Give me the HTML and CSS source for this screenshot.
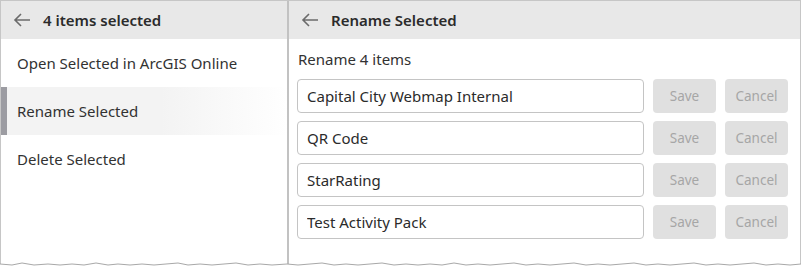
FILE: index.html
```html
<!DOCTYPE html>
<html lang="en">
<head>
  <meta charset="UTF-8" />
  <title>Rename Selected</title>
  <link rel="stylesheet" href="styles.css">
</head>
<body>
  <div class="frame">
    <!-- Left panel: selection actions -->
    <div class="side">
      <div class="panel-header">
        <svg class="back" width="18" height="14" viewBox="0 0 18 14"><path d="M17 7H2M8 1L2 7l6 6" fill="none" stroke="#6b6b6b" stroke-width="1.6"/></svg>
        <span>4 items selected</span>
      </div>
      <a href="#" class="menu-item">Open Selected in ArcGIS Online</a>
      <a href="#" class="menu-item active">Rename Selected</a>
      <a href="#" class="menu-item">Delete Selected</a>
    </div>

    <!-- Right panel: rename form -->
    <div class="main">
      <div class="panel-header">
        <svg class="back" width="18" height="14" viewBox="0 0 18 14"><path d="M17 7H2M8 1L2 7l6 6" fill="none" stroke="#6b6b6b" stroke-width="1.6"/></svg>
        <span>Rename Selected</span>
      </div>
      <div class="rename-body">
        <div class="rename-label">Rename 4 items</div>
        <div class="rename-row">
          <input type="text" value="Capital City Webmap Internal" />
          <button disabled>Save</button>
          <button disabled>Cancel</button>
        </div>
        <div class="rename-row">
          <input type="text" value="QR Code" />
          <button disabled>Save</button>
          <button disabled>Cancel</button>
        </div>
        <div class="rename-row">
          <input type="text" value="StarRating" />
          <button disabled>Save</button>
          <button disabled>Cancel</button>
        </div>
        <div class="rename-row">
          <input type="text" value="Test Activity Pack" />
          <button disabled>Save</button>
          <button disabled>Cancel</button>
        </div>
      </div>
    </div>
  </div>

  <!-- Torn bottom edge -->
  <svg class="torn" width="801" height="6" viewBox="0 0 801 6">
    <path d="M0 3 L12 4 L22 2 L34 4 L48 3 L60 4 L72 3 L84 4 L96 2 L108 4 L118 3 L130 4 L142 3 L154 4 L166 3 L178 2 L188 4 L200 3 L212 4 L224 3 L236 2 L248 4 L260 3 L272 4 L287 3 L298 4 L310 3 L322 2 L334 4 L346 3 L358 4 L370 3 L382 2 L394 4 L406 3 L418 4 L430 3 L442 4 L454 2 L466 4 L478 3 L490 4 L502 3 L514 2 L526 4 L538 3 L550 4 L562 3 L574 2 L586 4 L598 3 L610 4 L622 3 L634 2 L646 4 L658 3 L670 4 L682 3 L694 2 L706 4 L718 3 L730 4 L742 3 L754 2 L766 4 L778 3 L790 4 L801 3" fill="none" stroke="#a8a8a8" stroke-width="1"/>
  </svg>
</body>
</html>
```

FILE: styles.css
```css
/* Basic reset */
* {
  margin: 0;
  padding: 0;
  box-sizing: border-box;
  font-family: "Noto Sans", "Open Sans", sans-serif;
}

body {
  background-color: #ffffff;
  color: #323232;
}

/* Outer frame with two panels */
.frame {
  display: flex;
  height: 264px;
  border: 1px solid #c6c6c6;
  border-bottom: none;
}

.side {
  width: 288px;
  border-right: 2px solid #c2c2c2;
  display: flex;
  flex-direction: column;
}

.main {
  flex: 1;
  display: flex;
  flex-direction: column;
}

/* Gray header bars */
.panel-header {
  height: 38px;
  background-color: #e8e8e8;
  display: flex;
  align-items: center;
  padding-left: 12px;
  font-size: 15px;
  font-weight: 600;
  color: #2b2b2b;
}

.back {
  margin-right: 12px;
}

/* Left menu */
.menu-item {
  height: 48px;
  display: flex;
  align-items: center;
  padding-left: 16px;
  text-decoration: none;
  color: #323232;
  font-size: 15px;
}

.menu-item.active {
  background: linear-gradient(to right, #f3f3f3 55%, #ffffff);
  border-left: 6px solid #9c9ca2;
  padding-left: 10px;
}

/* Rename form */
.rename-body {
  padding: 10px 12px 0 8px;
  display: flex;
  flex-direction: column;
  gap: 8px;
}

.rename-label {
  font-size: 15px;
  padding-left: 1px;
  margin-bottom: 2px;
}

.rename-row {
  display: flex;
  gap: 9px;
}

.rename-row input {
  flex: 1;
  height: 34px;
  border: 1px solid #c4c4c4;
  border-radius: 4px;
  padding: 0 9px;
  font-size: 15px;
  color: #2b2b2b;
  outline: none;
}

.rename-row button {
  width: 63px;
  height: 34px;
  border: none;
  border-radius: 4px;
  background-color: #e0e0e0;
  color: #a6a6a6;
  font-size: 13.5px;
}

.torn {
  display: block;
  margin-top: -3px;
}
```
